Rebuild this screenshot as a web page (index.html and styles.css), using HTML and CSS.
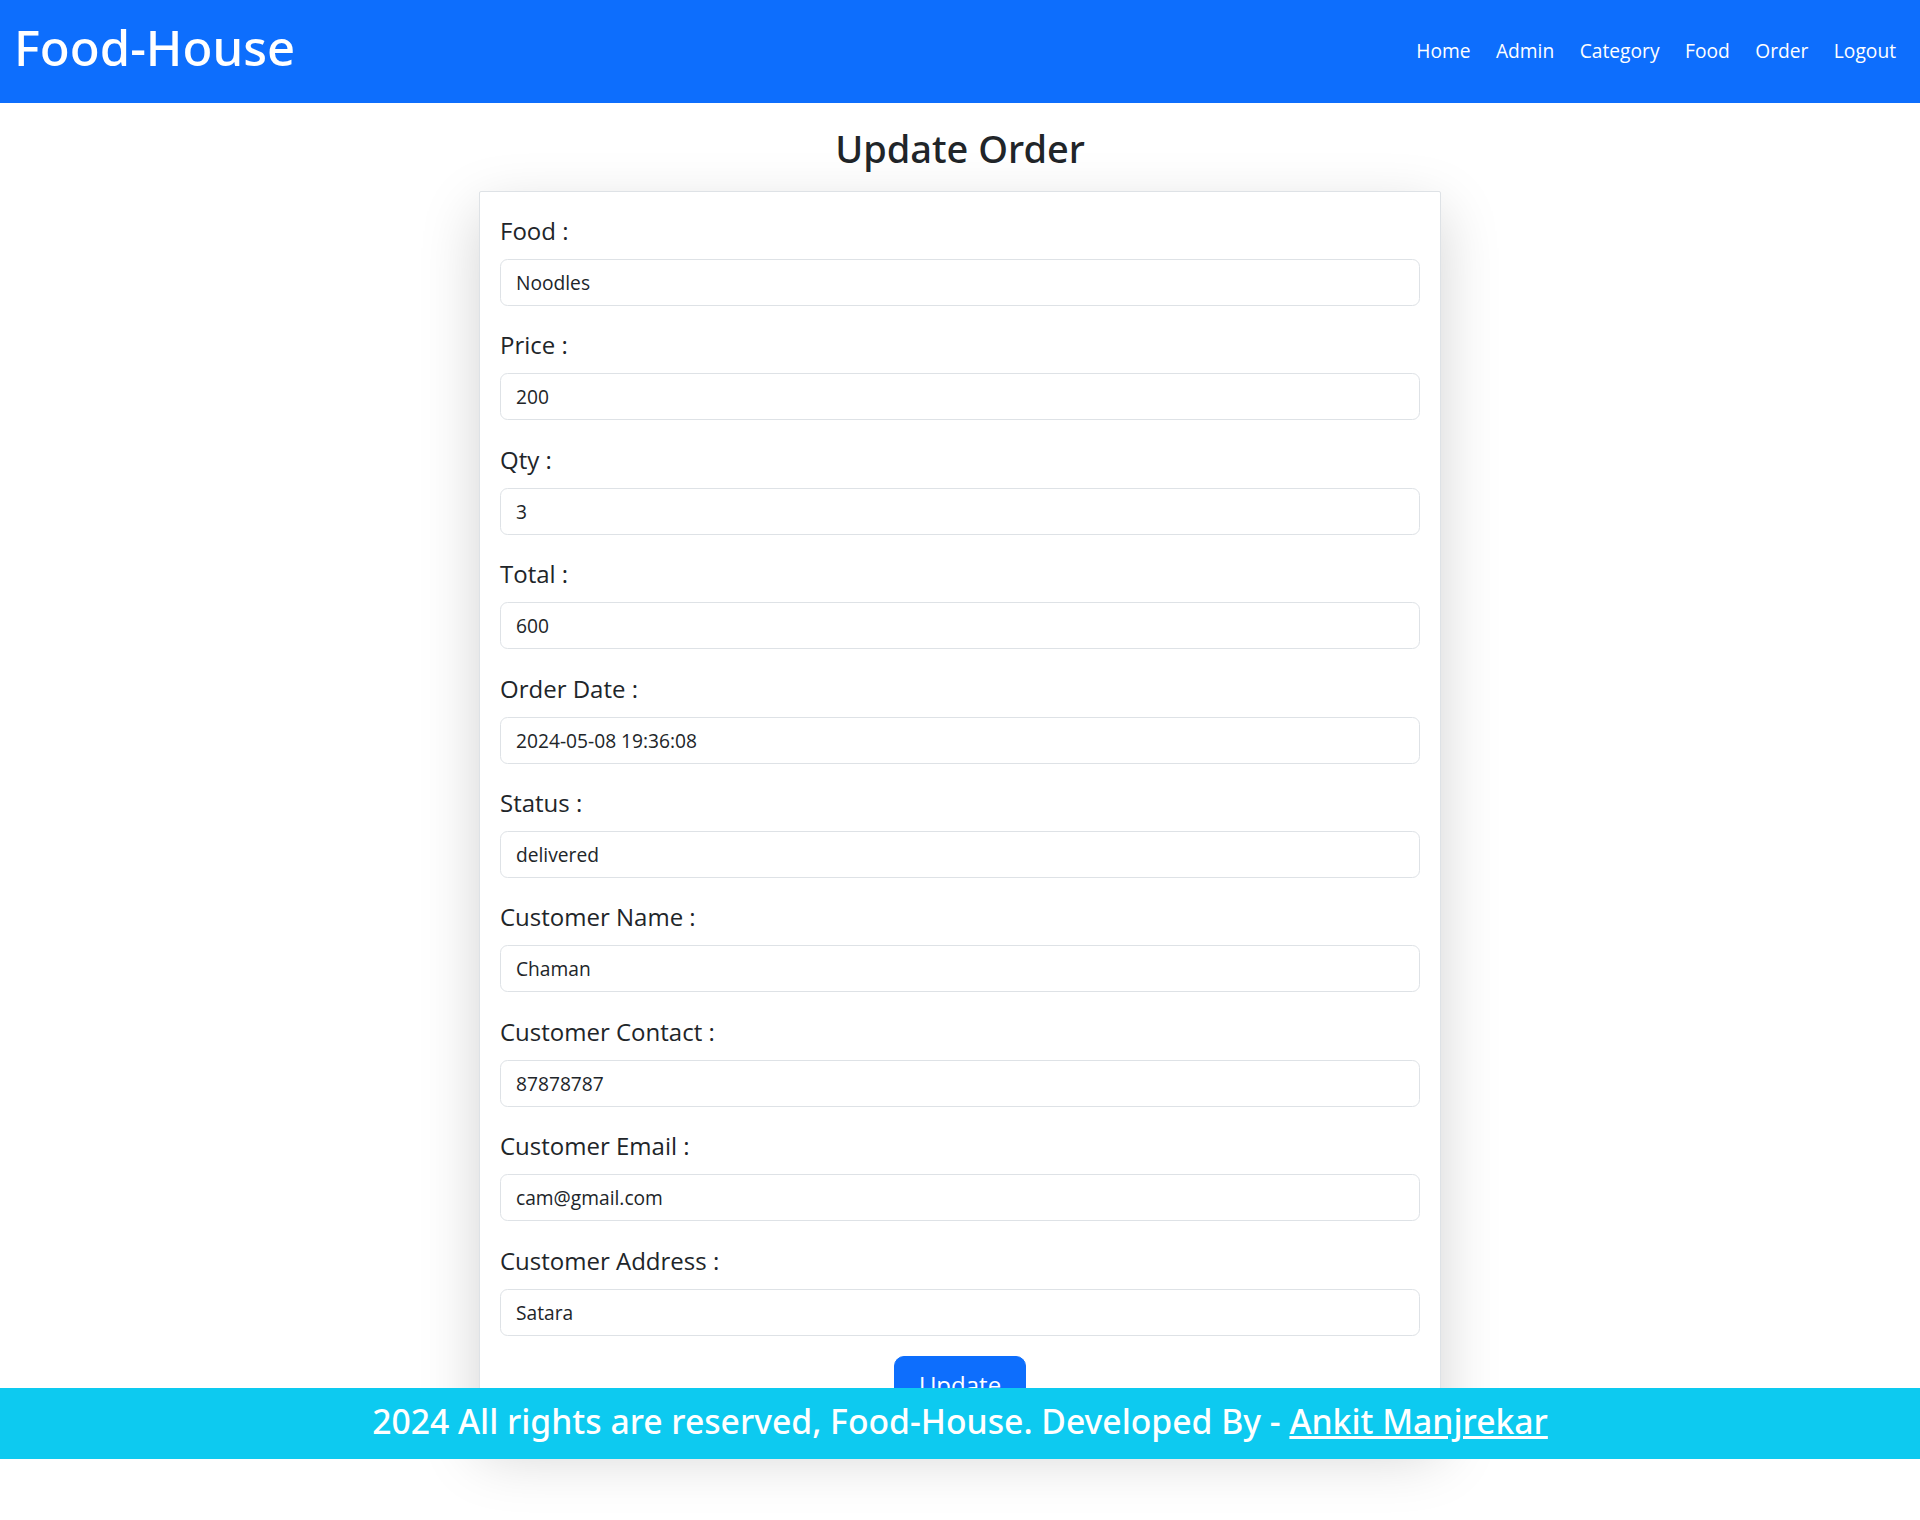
FILE: index.html
```html
<!DOCTYPE html>
<html lang="en">
<head>
<meta charset="utf-8">
<title>Update Order</title>
<link rel="stylesheet" href="styles.css">
</head>
<body>
<nav class="navbar">
  <a class="brand" href="#">Food-House</a>
  <ul class="nav-links">
    <li><a href="#">Home</a></li>
    <li><a href="#">Admin</a></li>
    <li><a href="#">Category</a></li>
    <li><a href="#">Food</a></li>
    <li><a href="#">Order</a></li>
    <li><a href="#">Logout</a></li>
  </ul>
</nav>
<main class="page">
  <h2 class="page-title">Update Order</h2>
  <form class="card">
    <div class="field">
      <label class="label">Food :</label>
      <input class="input" type="text" value="Noodles">
    </div>
    <div class="field">
      <label class="label">Price :</label>
      <input class="input" type="text" value="200">
    </div>
    <div class="field">
      <label class="label">Qty :</label>
      <input class="input" type="text" value="3">
    </div>
    <div class="field">
      <label class="label">Total :</label>
      <input class="input" type="text" value="600">
    </div>
    <div class="field">
      <label class="label">Order Date :</label>
      <input class="input" type="text" value="2024-05-08 19:36:08">
    </div>
    <div class="field">
      <label class="label">Status :</label>
      <input class="input" type="text" value="delivered">
    </div>
    <div class="field">
      <label class="label">Customer Name :</label>
      <input class="input" type="text" value="Chaman">
    </div>
    <div class="field">
      <label class="label">Customer Contact :</label>
      <input class="input" type="text" value="87878787">
    </div>
    <div class="field">
      <label class="label">Customer Email :</label>
      <input class="input" type="text" value="cam@gmail.com">
    </div>
    <div class="field">
      <label class="label">Customer Address :</label>
      <input class="input" type="text" value="Satara">
    </div>
    <div class="actions">
      <button class="btn" type="button">Update</button>
    </div>
  </form>
</main>
<footer class="footer">
  <h3 class="footer-text">2024 All rights are reserved, Food-House. Developed By - <a href="#">Ankit Manjrekar</a></h3>
</footer>
</body>
</html>
```

FILE: styles.css
```css
html, body {
  margin: 0;
  padding: 0;
}

body {
  position: relative;
  min-height: 1520px;
  background: #ffffff;
  color: #212529;
  font-family: "Open Sans", "Noto Sans", sans-serif;
}

.navbar {
  box-sizing: border-box;
  height: 103px;
  background: #0d6efd;
  display: flex;
  justify-content: space-between;
  align-items: flex-start;
  padding: 0 24px 0 14px;
}

.brand {
  margin-top: 18px;
  color: #ffffff;
  text-decoration: none;
  font-family: "Noto Sans", "Open Sans", sans-serif;
  font-size: 49px;
  font-weight: 500;
  line-height: 1.2;
}

.nav-links {
  list-style: none;
  margin: 37px 0 0;
  padding: 0;
  display: flex;
  gap: 25.5px;
}

.nav-links a {
  color: #ffffff;
  text-decoration: none;
  font-size: 19.2px;
  line-height: 28.8px;
}

.page {
  display: flex;
  flex-direction: column;
  align-items: center;
}

.page-title {
  margin: 22px 0 20px;
  font-family: "Noto Sans", "Open Sans", sans-serif;
  font-size: 38px;
  font-weight: 500;
  line-height: 46px;
  text-align: center;
}

.card {
  box-sizing: border-box;
  width: 962px;
  padding: 20px 20px 20px;
  background: #ffffff;
  border: 1px solid #dee2e6;
  border-radius: 2px;
  box-shadow: 0 20px 60px rgba(0, 0, 0, 0.175);
}

.field {
  display: flex;
  flex-direction: column;
  margin-bottom: 20.4px;
}

.label {
  font-size: 24px;
  line-height: 37.5px;
  margin-bottom: 9.5px;
}

.input {
  box-sizing: border-box;
  height: 47px;
  width: 100%;
  padding: 0 15px;
  border: 1px solid #dee2e6;
  border-radius: 7.5px;
  font-family: "Open Sans", "Noto Sans", sans-serif;
  font-size: 19.2px;
  color: #212529;
  background: #ffffff;
}

.actions {
  display: flex;
  justify-content: center;
}

.btn {
  padding: 10px 24px;
  border: 1px solid #0d6efd;
  border-radius: 10px;
  background: #0d6efd;
  color: #ffffff;
  font-family: "Open Sans", "Noto Sans", sans-serif;
  font-size: 24px;
  line-height: 1.5;
}

.footer {
  position: absolute;
  top: 1388px;
  left: 0;
  right: 0;
  box-sizing: border-box;
  height: 71px;
  padding-top: 13px;
  background: #0dcaf0;
  text-align: center;
}

.footer-text {
  margin: 0;
  color: #ffffff;
  font-family: "Noto Sans", "Open Sans", sans-serif;
  font-size: 33.7px;
  font-weight: 500;
  line-height: 1.2;
}

.footer-text a {
  color: #ffffff;
  text-decoration: underline;
}
```
